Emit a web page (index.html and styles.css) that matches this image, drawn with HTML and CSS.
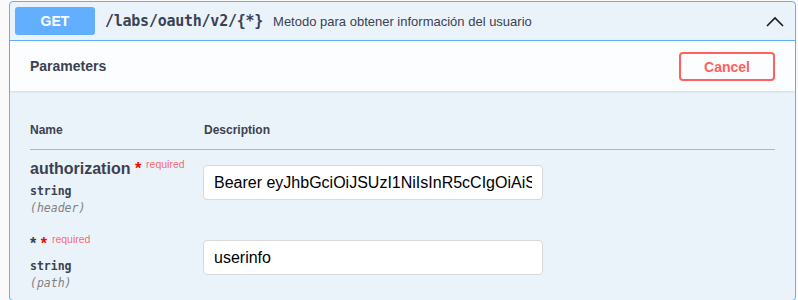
FILE: index.html
```html
<!DOCTYPE html>
<html>
<head>
    <title>Swagger - oauth</title>
    <link rel="stylesheet" href="styles.css">
</head>
<body>

    <div class="opblock">
        <div class="summary">
            <span class="method">GET</span>
            <span class="path">/labs/oauth/v2/{*}</span>
            <span class="summary-desc">Metodo para obtener información del usuario</span>
            <svg class="arrow" width="18" height="11" viewBox="0 0 18 11">
                <polyline points="1,10 9,2 17,10" fill="none" stroke="#1b1b1b" stroke-width="1.6"/>
            </svg>
        </div>

        <div class="section-header">
            <h4>Parameters</h4>
            <button class="btn-cancel">Cancel</button>
        </div>

        <div class="table-container">
            <div class="params-head">
                <div>Name</div>
                <div>Description</div>
            </div>

            <div class="param-row">
                <div class="param-col">
                    <div class="param-name required">authorization<span>&nbsp;*</span></div>
                    <div class="param-type">string</div>
                    <div class="param-in">(header)</div>
                </div>
                <div class="param-desc">
                    <input type="text" value="Bearer eyJhbGciOiJSUzI1NiIsInR5cCIgOiAiSldUIiwia2lkIiA6ICJ4YWJj">
                </div>
            </div>

            <div class="param-row">
                <div class="param-col">
                    <div class="param-name required">*<span>&nbsp;*</span></div>
                    <div class="param-type">string</div>
                    <div class="param-in">(path)</div>
                </div>
                <div class="param-desc">
                    <input type="text" value="userinfo">
                </div>
            </div>
        </div>
    </div>

</body>
</html>
```

FILE: styles.css
```css
body {
    font-family: "Liberation Sans", Arial, sans-serif;
    background-color: #fafafa;
    color: #3b4151;
    margin: 0;
    padding: 1px 2px 0 9px;
}

.opblock {
    border: 1px solid #61affe;
    border-radius: 4px;
    background-color: #ebf3fa;
}

/* top bar with method + path */
.summary {
    display: flex;
    align-items: center;
    padding: 5px;
    border-bottom: 1px solid #61affe;
}

.method {
    min-width: 80px;
    height: 28px;
    line-height: 28px;
    text-align: center;
    background-color: #61affe;
    color: #fff;
    font-size: 14px;
    font-weight: bold;
    border-radius: 3px;
}

.path {
    padding: 0 10px;
    font-family: "DejaVu Sans Mono", monospace;
    font-size: 15px;
    font-weight: bold;
    letter-spacing: -0.25px;
}

.summary-desc {
    flex: 1;
    font-size: 13px;
}

.arrow {
    margin-right: 6px;
}

/* Parameters header */
.section-header {
    display: flex;
    align-items: center;
    justify-content: space-between;
    min-height: 50px;
    padding: 0 20px;
    background-color: rgba(255, 255, 255, 0.8);
    box-shadow: 0 1px 2px rgba(0, 0, 0, 0.1);
}

.section-header h4 {
    margin: 0;
    font-size: 14px;
    font-weight: bold;
}

.btn-cancel {
    width: 96px;
    height: 29px;
    margin-top: 1px;
    background: transparent;
    border: 2px solid #ff6060;
    border-radius: 4px;
    color: #ff6060;
    font-family: "Liberation Sans", Arial, sans-serif;
    font-size: 14px;
    font-weight: bold;
    cursor: pointer;
}

/* table */
.table-container {
    padding: 20px 20px 0 20px;
}

.params-head {
    display: grid;
    grid-template-columns: 174px 1fr;
    padding: 12px 0;
    font-size: 12px;
    font-weight: bold;
    border-bottom: 1px solid #b0b7c3;
}

.param-row {
    display: grid;
    grid-template-columns: 173px 1fr;
    padding: 10px 0;
}

.param-name {
    font-size: 16px;
    font-weight: bold;
    line-height: 18px;
}

.param-name span {
    color: red;
}

.param-name.required:after {
    content: "required";
    position: relative;
    top: -6px;
    padding: 5px;
    font-size: 10.5px;
    font-weight: normal;
    color: rgba(255, 0, 0, 0.6);
}

.param-type {
    padding: 5px 0 0;
    font-family: "DejaVu Sans Mono", monospace;
    font-size: 11.5px;
    font-weight: 600;
    line-height: 14px;
}

.param-in {
    padding: 4px 0 0;
    font-family: "DejaVu Sans Mono", monospace;
    font-size: 11.5px;
    font-style: italic;
    color: #808080;
    line-height: 13px;
}

.param-desc input {
    width: 340px;
    margin-top: 5px;
    padding: 8px 10px;
    box-sizing: border-box;
    height: 35px;
    border: 1px solid #d9d9d9;
    border-radius: 4px;
    background: #fff;
    font-family: "Liberation Sans", Arial, sans-serif;
    font-size: 16px;
    color: #000;
}
```
